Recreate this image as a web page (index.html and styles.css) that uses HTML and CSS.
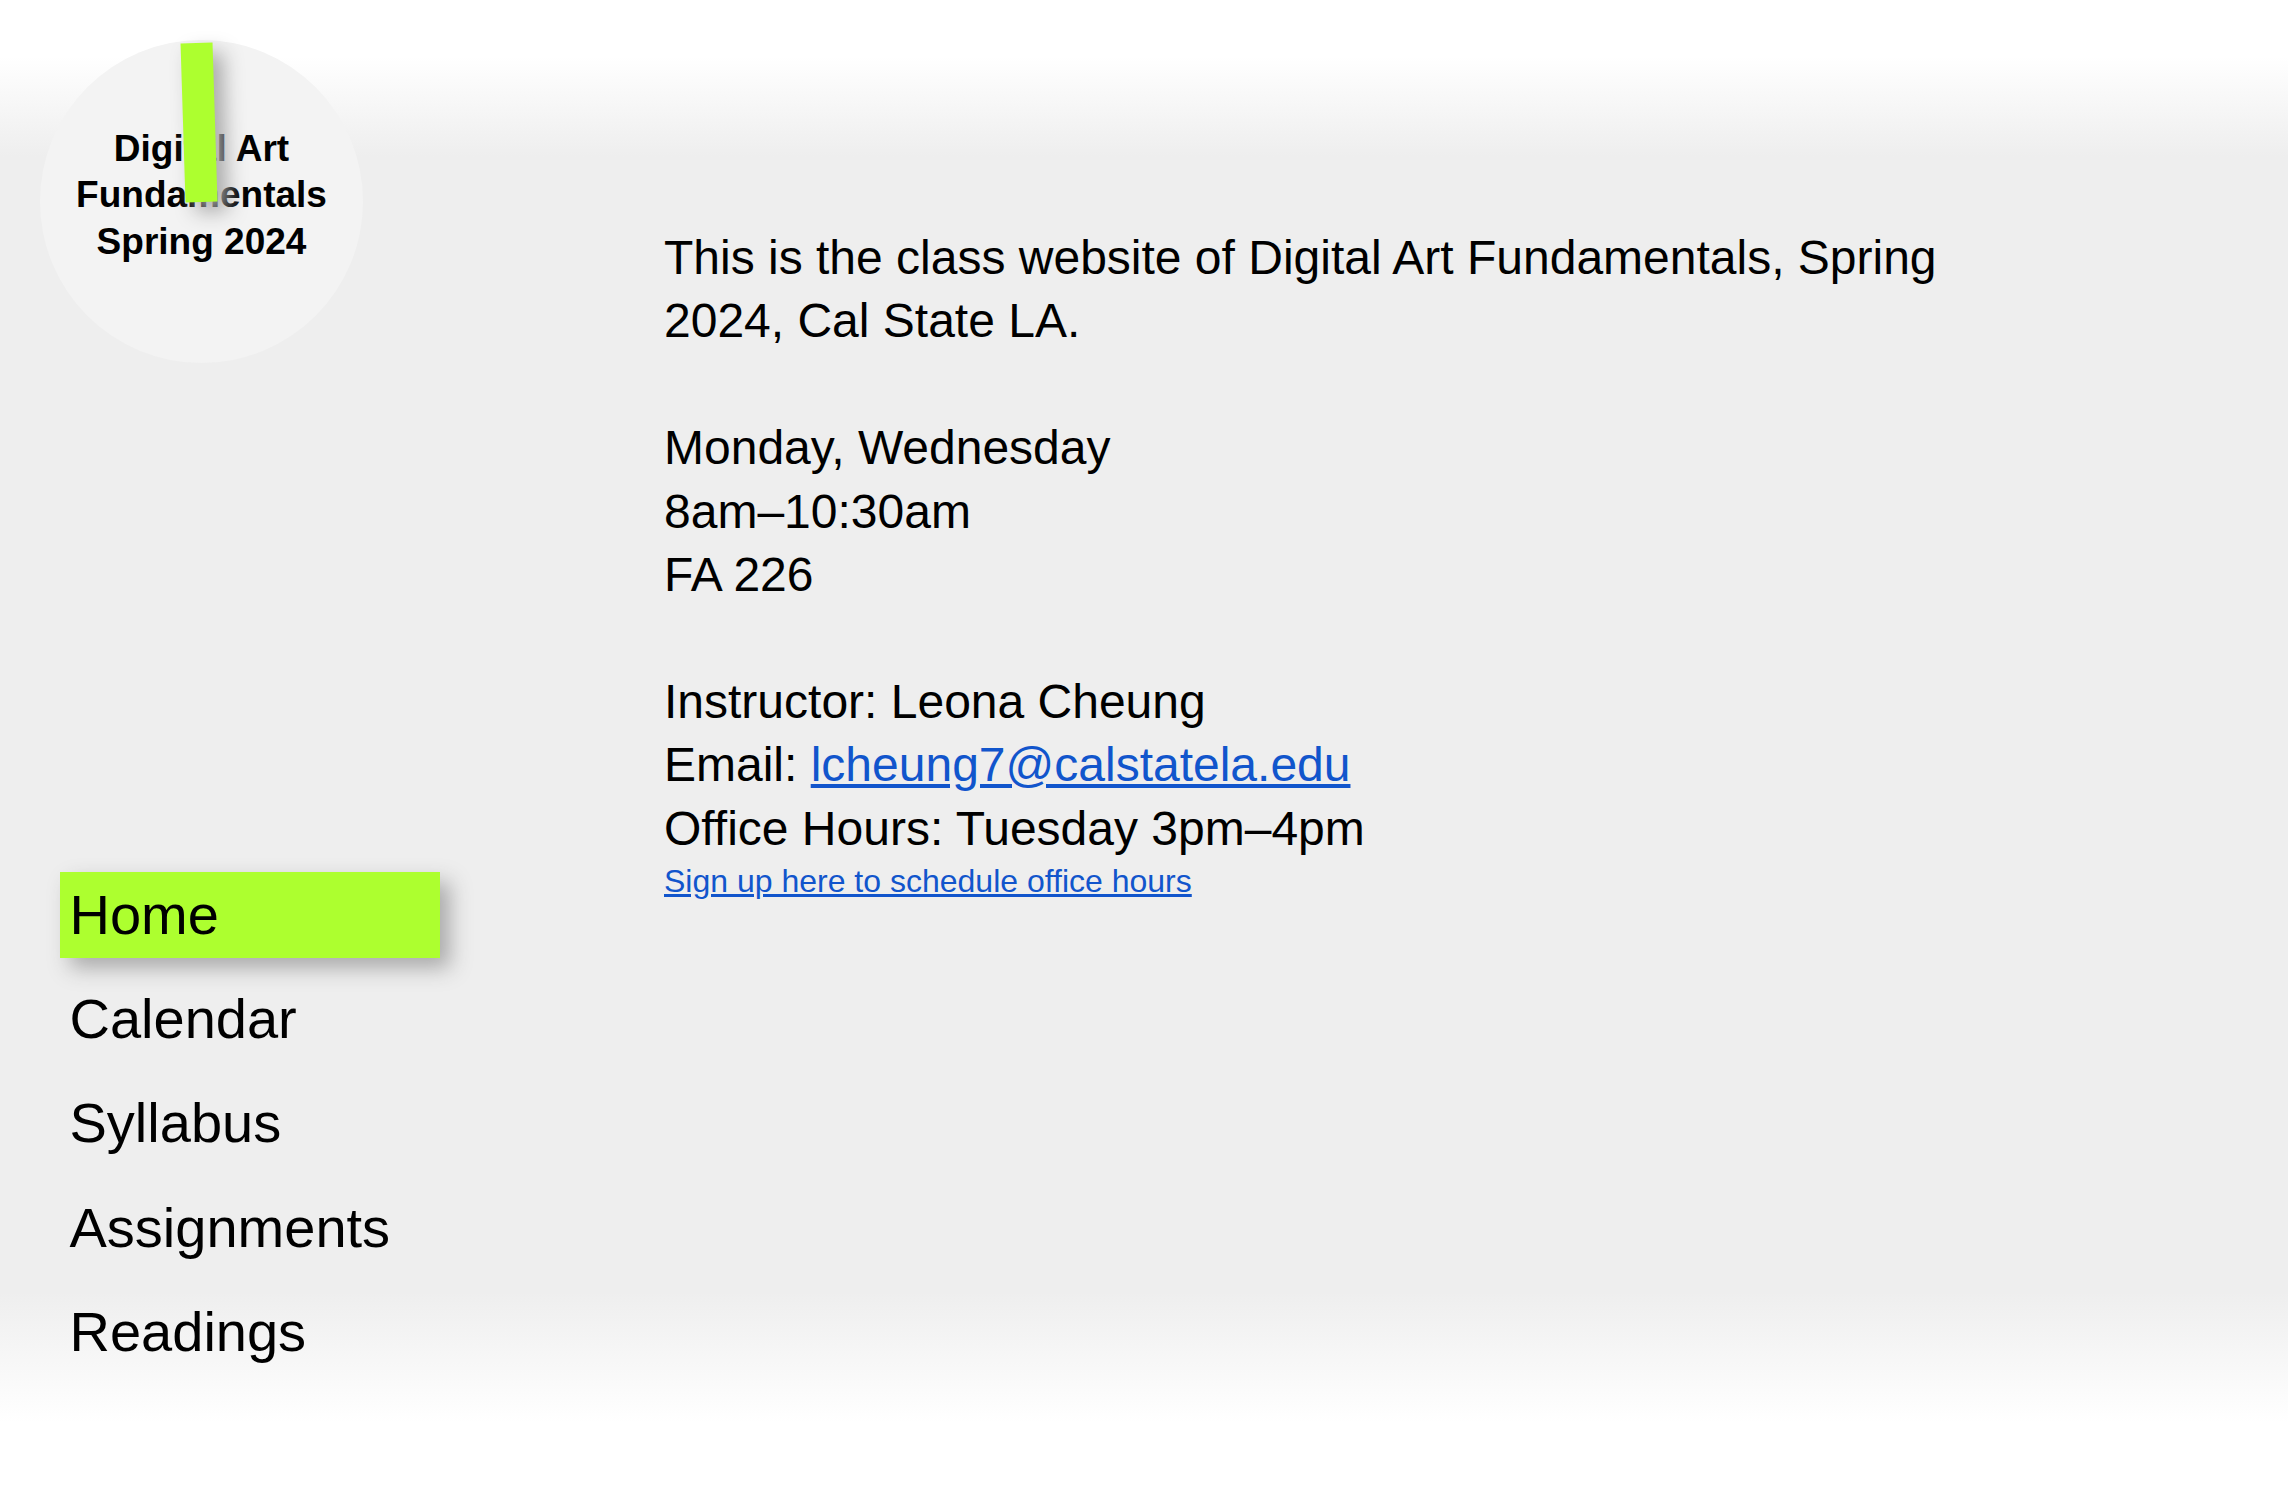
FILE: index.html
```html
<!DOCTYPE html>
<html lang="en">
<head>
<meta charset="utf-8">
<title>Digital Art Fundamentals, Spring 2024</title>
<link rel="stylesheet" href="styles.css">
</head>
<body>
<div class="page">
  <aside class="sidebar">
    <div class="logo">
      <div class="logo-title">Digital Art<br>Fundamentals<br>Spring 2024</div>
      <span class="logo-bar"></span>
    </div>
    <nav class="nav">
      <a class="nav-item active" href="#">Home</a>
      <a class="nav-item" href="#">Calendar</a>
      <a class="nav-item" href="#">Syllabus</a>
      <a class="nav-item" href="#">Assignments</a>
      <a class="nav-item" href="#">Readings</a>
    </nav>
  </aside>
  <main class="main">
    <p class="para">This is the class website of Digital Art Fundamentals, Spring 2024, Cal State LA.</p>
    <p class="para">Monday, Wednesday<br>8am–10:30am<br>FA 226</p>
    <p class="para contact">Instructor: Leona Cheung<br>Email: <a class="link" href="#">lcheung7@calstatela.edu</a><br>Office Hours: Tuesday 3pm–4pm</p>
    <p class="signup"><a class="link" href="#">Sign up here to schedule office hours</a></p>
  </main>
</div>
</body>
</html>
```
FILE: styles.css
```css
html, body {
  margin: 0;
  padding: 0;
  background: #fff;
}

body {
  font-family: "Liberation Sans", Arial, sans-serif;
  color: #000;
}

.page {
  display: grid;
  grid-template-columns: 664px 1340px;
  height: 100vh;
  background: linear-gradient(to bottom, #fff 3.8%, #eeeeee 10.5%, #eeeeee 86.6%, #fff 95.3%);
}

.sidebar {
  display: flex;
  flex-direction: column;
  justify-content: space-between;
  padding: 40px 0 117px 40px;
  box-sizing: border-box;
  height: 100vh;
}

.logo {
  position: relative;
  width: 323px;
  height: 323px;
  border-radius: 50%;
  background: #f3f3f3;
  display: flex;
  align-items: center;
  justify-content: center;
  padding-bottom: 12px;
  box-sizing: border-box;
}

.logo-title {
  font-weight: 700;
  font-size: 37px;
  line-height: 46.5px;
  text-align: center;
}

.logo-bar {
  position: absolute;
  left: 143px;
  top: 3px;
  width: 32px;
  height: 158.5px;
  background: #adff2f;
  transform: rotate(-1.8deg);
  box-shadow: 10px 10px 20px #aaaaaa;
}

.nav {
  display: flex;
  flex-direction: column;
  gap: 18.3px;
  margin-left: 20px;
}

.nav-item {
  display: block;
  width: 380px;
  box-sizing: border-box;
  padding: 10px 8px 10px 9.5px;
  font-size: 56px;
  line-height: 66px;
  color: #000;
  text-decoration: none;
}

.nav-item.active {
  background: #adff2f;
  box-shadow: 10px 10px 20px #aaaaaa;
}

.main {
  padding-top: 226px;
}

.para {
  margin: 0 0 63.4px;
  font-size: 48px;
  line-height: 63.4px;
}

.para.contact {
  margin-bottom: 0;
}

.signup {
  margin: 0;
  font-size: 32px;
  line-height: 43.5px;
}

.link {
  color: #1155cc;
  text-decoration: underline;
}
```
